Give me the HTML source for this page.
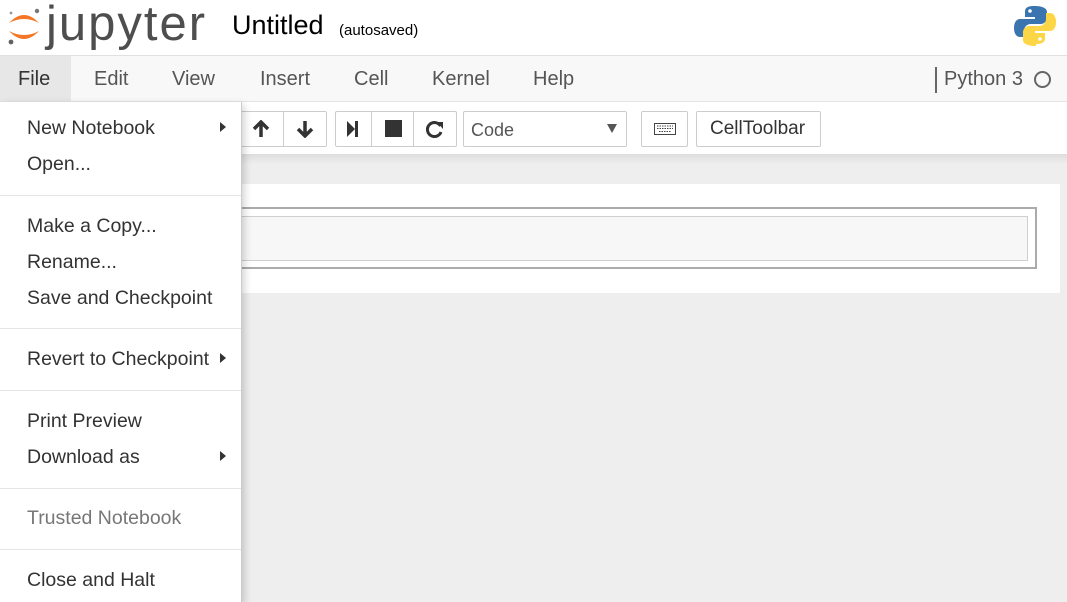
<!DOCTYPE html>
<html><head><style>
*{margin:0;padding:0;box-sizing:border-box}
body{width:1067px;height:602px;overflow:hidden;background:#eee;font-family:"Liberation Sans",sans-serif;color:#333;position:relative}
.hdr{position:absolute;left:0;top:0;width:1067px;height:56px;background:#fff;border-bottom:1px solid #e0e0e0}
.menu{position:absolute;left:0;top:56px;width:1067px;height:46px;background:#f8f8f8;border-bottom:1px solid #e4e4e4}
.menu span{position:absolute;top:12px;font-size:20px;color:#555}
.tb{position:absolute;left:0;top:102px;width:1067px;height:52px;background:#fff}
.btn{position:absolute;top:9px;height:36px;border:1px solid #ccc;border-radius:2px;background:#fff}
.cellc{position:absolute;left:200px;top:184px;width:860px;height:109px;background:#fff}
.dd{position:absolute;left:0;top:102px;width:242px;height:500px;background:#fff;border-right:1px solid #ccc;box-shadow:2px 3px 8px rgba(0,0,0,.2)}
.dd div.i{position:absolute;left:27px;font-size:19.5px;color:#333}
.dd hr{position:absolute;left:0;width:241px;border:0;border-top:1px solid #e5e5e5}
.car{position:absolute;left:220px;width:0;height:0;border-top:5px solid transparent;border-bottom:5px solid transparent;border-left:6px solid #333}
</style></head><body>
<div class="hdr">
<svg style="position:absolute;left:6px;top:6px" width="36" height="40" viewBox="0 0 36 40">
<path d="M3 17 Q18 1 33 17 Q18 9 3 17Z" fill="#f37726"/>
<path d="M3 25 Q18 41 33 25 Q18 33 3 25Z" fill="#f37726"/>
<circle cx="31" cy="5" r="2.2" fill="#767677"/><circle cx="5" cy="36" r="2.4" fill="#616262"/><circle cx="5" cy="7" r="1.4" fill="#989798"/>
</svg>
<div style="position:absolute;left:46px;top:-4px;font-size:49px;color:#4e4e4e;letter-spacing:2px">jupyter</div>
<div style="position:absolute;left:232px;top:10px;font-size:27px;color:#000">Untitled</div>
<div style="position:absolute;left:339px;top:22px;font-size:15px;color:#000">(autosaved)</div>
<svg style="position:absolute;left:1014px;top:4px" width="42" height="42" viewBox="0 0 42 42">
<path d="M20 2c-9 0-9 4-9 6v5h10v2H6c-4 0-6 4-6 9s2 9 6 9h4v-6c0-4 3-7 7-7h10c3 0 6-3 6-6V8c0-3-3-6-13-6z" fill="#3a75b0"/>
<path d="M22 40c9 0 9-4 9-6v-5H21v-2h15c4 0 6-4 6-9s-2-9-6-9h-4v6c0 4-3 7-7 7H15c-3 0-6 3-6 6v8c0 3 3 6 13 6z" fill="#fdd648"/>
<circle cx="16" cy="7" r="1.8" fill="#fff"/><circle cx="26" cy="35" r="1.8" fill="#fff"/>
</svg>
</div>
<div class="menu">
<div style="position:absolute;left:0;top:0;width:71px;height:45px;background:#e7e7e7"></div>
<span style="left:18px;color:#333">File</span><span style="left:94px">Edit</span><span style="left:172px">View</span><span style="left:260px">Insert</span><span style="left:354px">Cell</span><span style="left:432px">Kernel</span><span style="left:533px">Help</span>
<div style="position:absolute;left:935px;top:11px;width:2px;height:26px;background:#666"></div>
<span style="left:944px">Python 3</span>
<div style="position:absolute;left:1034px;top:15px;width:17px;height:17px;border:2.5px solid #666;border-radius:50%"></div>
</div>
<div class="tb">
<div class="btn" style="left:200px;width:127px"></div>
<div style="position:absolute;left:283px;top:9px;width:1px;height:36px;background:#ccc"></div>
<svg style="position:absolute;left:252px;top:18px" width="18" height="18" viewBox="0 0 18 18"><path d="M2 9L9 2l7 7M9 2v15" stroke="#333" stroke-width="3.5" fill="none"/></svg>
<svg style="position:absolute;left:296px;top:18px" width="18" height="18" viewBox="0 0 18 18"><path d="M2 9l7 7 7-7M9 16V1" stroke="#333" stroke-width="3.5" fill="none"/></svg>
<div class="btn" style="left:335px;width:122px"></div>
<div style="position:absolute;left:371px;top:9px;width:1px;height:36px;background:#ccc"></div>
<div style="position:absolute;left:413px;top:9px;width:1px;height:36px;background:#ccc"></div>
<svg style="position:absolute;left:345px;top:18px" width="16" height="18"><path d="M2 1l8 8-8 8z" fill="#333"/><rect x="10" y="1" width="3" height="16" fill="#333"/></svg>
<div style="position:absolute;left:385px;top:18px;width:17px;height:17px;background:#333"></div>
<svg style="position:absolute;left:426px;top:18px" width="18" height="18" viewBox="0 0 18 18"><path d="M14.5 6A7 7 0 1 0 15 12" stroke="#333" stroke-width="3" fill="none"/><path d="M11 2l6 0 0 7z" fill="#333"/></svg>
<div class="btn" style="left:463px;width:164px"></div>
<div style="position:absolute;left:471px;top:18px;font-size:18px;color:#555">Code</div>
<div style="position:absolute;left:607px;top:22px;border-left:5px solid transparent;border-right:5px solid transparent;border-top:9px solid #555"></div>
<div class="btn" style="left:641px;width:47px"></div>
<svg style="position:absolute;left:654px;top:21px" width="22" height="12"><rect x="0.5" y="0.5" width="21" height="11" fill="none" stroke="#444"/><path d="M3 3h16M3 5.5h16M5 8.5h12" stroke="#444" stroke-dasharray="1.5 1"/></svg>
<div class="btn" style="left:696px;width:125px"></div>
<div style="position:absolute;left:710px;top:16px;font-size:19px;color:#333">CellToolbar</div>
</div>
<div style="position:absolute;left:0;top:154px;width:1067px;height:10px;background:linear-gradient(#ddd,#eee)"></div>
<div class="cellc">
<div style="position:absolute;left:0;top:23px;width:837px;height:62px;border:2px solid #ababab;border-left:none"></div>
<div style="position:absolute;left:0;top:32px;width:828px;height:45px;background:#f7f7f7;border:1px solid #cfcfcf;border-left:none"></div>
</div>
<div class="dd">
<div class="i" style="top:15px">New Notebook</div><div class="car" style="top:20px"></div>
<div class="i" style="top:51px">Open...</div>
<hr style="top:93px">
<div class="i" style="top:113px">Make a Copy...</div>
<div class="i" style="top:149px">Rename...</div>
<div class="i" style="top:185px">Save and Checkpoint</div>
<hr style="top:226px">
<div class="i" style="top:246px">Revert to Checkpoint</div><div class="car" style="top:251px"></div>
<hr style="top:288px">
<div class="i" style="top:308px">Print Preview</div>
<div class="i" style="top:344px">Download as</div><div class="car" style="top:349px"></div>
<hr style="top:386px">
<div class="i" style="top:405px;color:#777">Trusted Notebook</div>
<hr style="top:447px">
<div class="i" style="top:467px">Close and Halt</div>
</div>
</body></html>
